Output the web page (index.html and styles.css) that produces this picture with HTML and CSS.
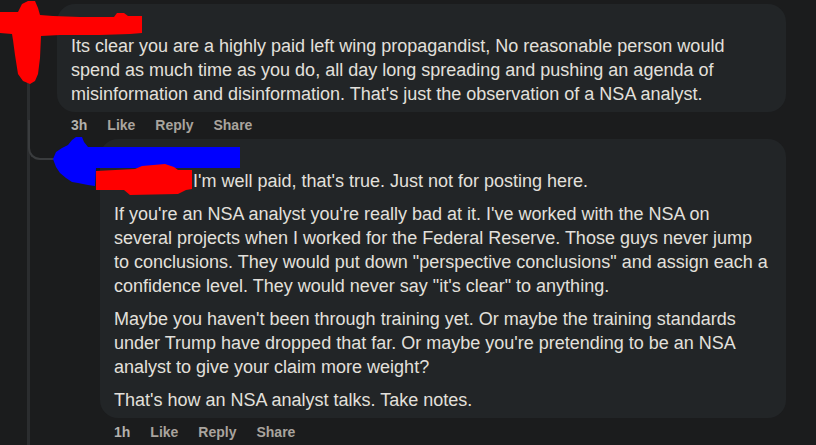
FILE: index.html
```html
<!DOCTYPE html>
<html lang="en">
<head>
<meta charset="utf-8">
<title>Comment thread</title>
<link rel="stylesheet" href="styles.css">
</head>
<body>
<div class="thread">
  <div class="rail"></div>
  <div class="branch"></div>

  <article class="comment top">
    <div class="bubble">
      <div class="author"></div>
      <p>Its clear you are a highly paid left wing propagandist, No reasonable person would<br>spend as much time as you do, all day long spreading and pushing an agenda of<br>misinformation and disinformation. That's just the observation of a NSA analyst.</p>
    </div>
    <div class="actions"><span class="time">3h</span><span>Like</span><span>Reply</span><span>Share</span></div>
  </article>

  <article class="comment reply">
    <div class="bubble">
      <div class="author"></div>
      <p><span class="mention"></span>I'm well paid, that's true. Just not for posting here.</p>
      <p>If you're an NSA analyst you're really bad at it. I've worked with the NSA on<br>several projects when I worked for the Federal Reserve. Those guys never jump<br>to conclusions. They would put down "perspective conclusions" and assign each a<br>confidence level. They would never say "it's clear" to anything.</p>
      <p>Maybe you haven't been through training yet. Or maybe the training standards<br>under Trump have dropped that far. Or maybe you're pretending to be an NSA<br>analyst to give your claim more weight?</p>
      <p>That's how an NSA analyst talks. Take notes.</p>
    </div>
    <div class="actions"><span class="time">1h</span><span>Like</span><span>Reply</span><span>Share</span></div>
  </article>

  <svg class="redact" width="816" height="445" viewBox="0 0 816 445" aria-hidden="true">
    <path fill="#ff0000" d="M0,12 L18,12 L22,4 L28,1 L35,1 L38,8 L40,15 L53,16 L80,17 L114,17 L117,13 L124,13 L128,16 L142,16 L142,33 L130,34 L100,35 L60,35 L41,36 L40,58 L38,74 L35,81 L30,84 L23,81 L18,74 L15,55 L13,40 L12,34 L0,33 Z"/>
    <path fill="#0000ff" d="M53,159 L56,152 L62,148 L68,145 L72,140 L76,137 L82,137 L84,142 L88,147 L240,147 L240,168 L96,168 L95,186 L88,185 L78,183 L72,182 L66,178 L60,173 L56,167 Z"/>
    <path fill="#ff0000" d="M96,171 L135,169 L142,166 L165,164 L174,167 L178,170 L192,170 L192,189 L186,190 L178,194 L130,195 L124,190 L96,190 Z"/>
  </svg>
</div>
</body>
</html>
```

FILE: styles.css
```css
html, body {
  margin: 0;
  padding: 0;
  background: #1b1c1d;
}

body {
  font-family: "Liberation Sans", Arial, Helvetica, sans-serif;
  color: #e2e0dc;
  width: 816px;
  height: 445px;
  overflow: hidden;
}

.thread {
  position: relative;
  padding-top: 4px;
  height: 441px;
}

.rail {
  position: absolute;
  left: 27px;
  top: 40px;
  bottom: 0;
  width: 3px;
  background: #2b2d2f;
}

.branch {
  position: absolute;
  left: 28px;
  top: 120px;
  width: 26px;
  height: 38px;
  border-left: 2px solid #3a3c3e;
  border-bottom: 2px solid #3a3c3e;
  border-bottom-left-radius: 12px;
}

.comment {
  display: flex;
  flex-direction: column;
}

.comment.top {
  margin-left: 57px;
  width: 729px;
}

.comment.reply {
  margin-left: 100px;
  width: 686px;
  margin-top: 4px;
}

.bubble {
  background: #222527;
  border-radius: 18px;
  padding: 8px 14px 6px;
}

.author {
  height: 22.4px;
}

.reply .author {
  height: 21.4px;
}

.bubble p {
  margin: 0;
  font-size: 18px;
  line-height: 24px;
  white-space: nowrap;
}

.bubble p + p {
  margin-top: 9px;
}

.mention {
  display: inline-block;
  width: 79px;
}

.actions {
  display: flex;
  gap: 20px;
  margin-top: 3px;
  padding-left: 14px;
  font-size: 14px;
  font-weight: bold;
  line-height: 20px;
  color: #a9a49e;
}

.reply .actions {
  margin-top: 4px;
}

.actions .time {
  color: #b3b1ad;
}

.redact {
  position: absolute;
  left: 0;
  top: 0;
}
```
